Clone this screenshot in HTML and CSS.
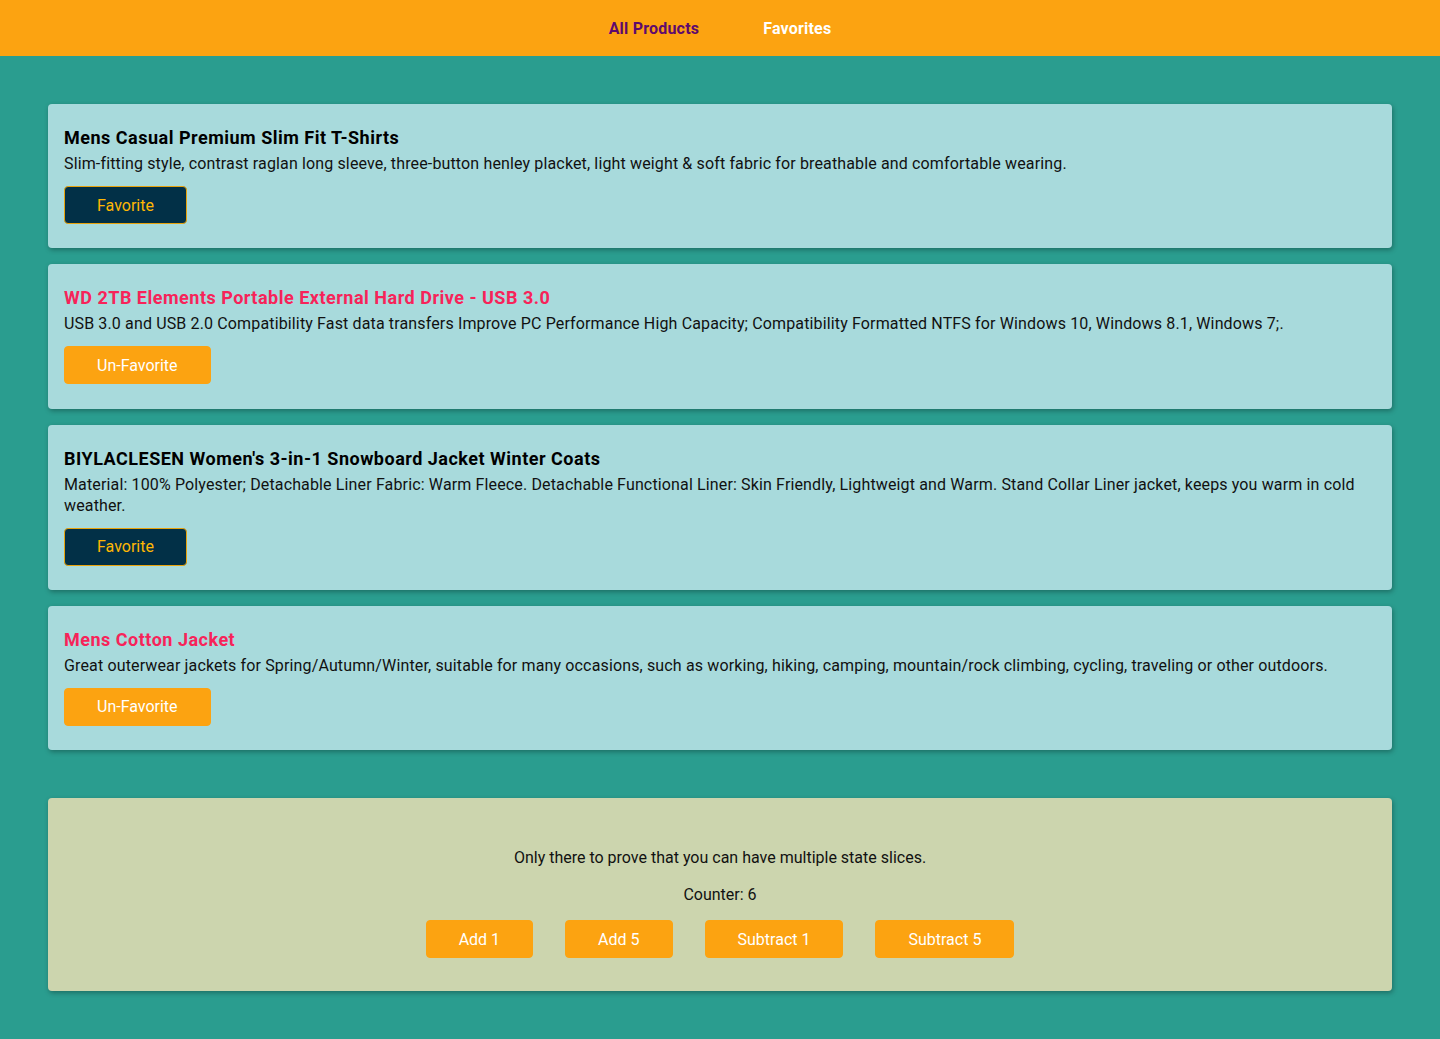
FILE: index.html
```html
<!DOCTYPE html>
<html lang="en">
<head>
<meta charset="utf-8">
<title>Products</title>
<link rel="stylesheet" href="styles.css">
</head>
<body>
<header class="nav">
  <a class="nav-link nav-link--active" href="#">All Products</a>
  <a class="nav-link" href="#">Favorites</a>
</header>
<main class="page">
  <section class="products">
    <article class="card">
      <h3 class="card-title">Mens Casual Premium Slim Fit T-Shirts</h3>
      <p class="card-desc">Slim-fitting style, contrast raglan long sleeve, three-button henley placket, light weight &amp; soft fabric for breathable and comfortable wearing.</p>
      <button class="btn btn--fav">Favorite</button>
    </article>
    <article class="card">
      <h3 class="card-title card-title--fav">WD 2TB Elements Portable External Hard Drive - USB 3.0</h3>
      <p class="card-desc">USB 3.0 and USB 2.0 Compatibility Fast data transfers Improve PC Performance High Capacity; Compatibility Formatted NTFS for Windows 10, Windows 8.1, Windows 7;.</p>
      <button class="btn btn--unfav">Un-Favorite</button>
    </article>
    <article class="card">
      <h3 class="card-title">BIYLACLESEN Women's 3-in-1 Snowboard Jacket Winter Coats</h3>
      <p class="card-desc">Material: 100% Polyester; Detachable Liner Fabric: Warm Fleece. Detachable Functional Liner: Skin Friendly, Lightweigt and Warm. Stand Collar Liner jacket, keeps you warm in cold weather.</p>
      <button class="btn btn--fav">Favorite</button>
    </article>
    <article class="card">
      <h3 class="card-title card-title--fav">Mens Cotton Jacket</h3>
      <p class="card-desc">Great outerwear jackets for Spring/Autumn/Winter, suitable for many occasions, such as working, hiking, camping, mountain/rock climbing, cycling, traveling or other outdoors.</p>
      <button class="btn btn--unfav">Un-Favorite</button>
    </article>
  </section>
  <section class="counter">
    <p class="counter-text">Only there to prove that you can have multiple state slices.</p>
    <p class="counter-text counter-text--last">Counter: 6</p>
    <div class="counter-actions">
      <button class="btn btn--unfav btn--counter">Add 1</button>
      <button class="btn btn--unfav btn--counter">Add 5</button>
      <button class="btn btn--unfav btn--counter">Subtract 1</button>
      <button class="btn btn--unfav btn--counter">Subtract 5</button>
    </div>
  </section>
</main>
</body>
</html>
```
FILE: styles.css
```css
* { box-sizing: border-box; }
html, body {
  margin: 0;
  padding: 0;
}
body {
  background: #2a9d8f;
  font-family: Roboto, "Noto Sans", Arial, sans-serif;
  font-size: 16px;
  color: #111;
  min-height: 1039px;
}
.nav {
  height: 56px;
  background: #fca311;
  display: flex;
  justify-content: center;
  align-items: center;
  gap: 64px;
}
.nav-link {
  color: #fff;
  font-weight: 700;
  font-size: 16px;
  letter-spacing: 0.2px;
  text-decoration: none;
}
.nav-link--active { color: #5e0a6d; }
.page {
  padding: 48px 48px 48px;
}
.products {
  display: flex;
  flex-direction: column;
  gap: 16px;
}
.card {
  background: #a8dadc;
  border-radius: 4px;
  padding: 16px 16px 24.25px;
  box-shadow: 1px 2px 5px rgba(0, 0, 0, 0.3);
}
.card-title {
  margin: 5px 0 2px;
  font-size: 18px;
  line-height: 26px;
  font-weight: 700;
  letter-spacing: 0.5px;
  color: #000;
}
.card-title--fav { color: #f72359; }
.card-desc {
  margin: 0;
  line-height: 21px;
  letter-spacing: 0.14px;
  color: #111;
}
.btn {
  font-family: inherit;
  font-size: 16px;
  height: 38px;
  padding: 0 32px;
  border-radius: 4px;
  cursor: pointer;
  margin-top: 12px;
  display: block;
}
.btn--fav {
  background: #023047;
  color: #ffb703;
  border: 1px solid #e8a30c;
}
.btn--unfav {
  background: #fca311;
  color: #fff;
  border: 1px solid #fca311;
}
.counter {
  margin-top: 48px;
  background: #ccd5ae;
  border-radius: 4px;
  padding: 33px 16px 33px;
  text-align: center;
  box-shadow: 1px 2px 5px rgba(0, 0, 0, 0.3);
}
.counter-text {
  margin: 16px 0;
  line-height: 21px;
}
.counter-text--last { margin-bottom: 15px; }
.counter-actions {
  display: flex;
  justify-content: center;
  gap: 32px;
}
.btn--counter { margin-top: 0; }
```
